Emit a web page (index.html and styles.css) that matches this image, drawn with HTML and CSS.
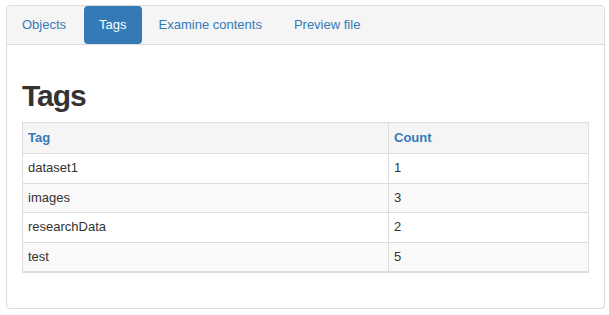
FILE: index.html
```html
<!DOCTYPE html>
<html>
<head>
<meta charset="utf-8">
<link rel="stylesheet" href="styles.css">
</head>
<body>
<div class="panel">
  <div class="panel-heading">
    <ul class="pills">
      <li><a href="#">Objects</a></li>
      <li class="active"><a href="#">Tags</a></li>
      <li><a href="#">Examine contents</a></li>
      <li><a href="#">Preview file</a></li>
    </ul>
  </div>
  <div class="panel-body">
    <h1 class="title">Tags</h1>
    <table class="tags">
      <colgroup><col class="c1"><col class="c2"></colgroup>
      <thead>
        <tr><th>Tag</th><th>Count</th></tr>
      </thead>
      <tbody>
        <tr><td>dataset1</td><td>1</td></tr>
        <tr><td>images</td><td>3</td></tr>
        <tr><td>researchData</td><td>2</td></tr>
        <tr><td>test</td><td>5</td></tr>
      </tbody>
    </table>
  </div>
</div>
</body>
</html>
```

FILE: styles.css
```css
html, body {
  margin: 0;
  padding: 0;
  background: #fff;
}
body {
  font-family: "Liberation Sans", Arial, Helvetica, sans-serif;
  font-size: 13px;
  color: #333;
  padding: 5px 0 0 6px;
}
.panel {
  width: 597px;
  border: 1px solid #ddd;
  border-radius: 4px;
  box-shadow: 0 1px 1px rgba(0,0,0,.05);
  background: #fff;
}
.panel-heading {
  background: #f5f5f5;
  border-bottom: 1px solid #ddd;
  border-radius: 3px 3px 0 0;
}
.pills {
  list-style: none;
  margin: 0;
  padding: 0;
  display: flex;
  gap: 2px;
}
.pills a {
  display: block;
  padding: 10px 15px 10px 15px;
  line-height: 18px;
  color: #337ab7;
  text-decoration: none;
  border-radius: 4px;
}
.pills li:first-child a {
  padding-right: 16px;
}
.pills .active a {
  background: #337ab7;
  color: #fff;
}
.panel-body {
  padding: 15px;
}
.title {
  margin: 19px 0 10px;
  font-size: 30px;
  line-height: 33px;
  font-weight: bold;
  letter-spacing: -1px;
  color: #333;
}
.tags {
  width: 567px;
  border-collapse: collapse;
  table-layout: fixed;
  margin-bottom: 20px;
  border: 1px solid #ddd;
  border-bottom: 2px solid #ddd;
}
.tags col.c1 { width: 366px; }
.tags th, .tags td {
  text-align: left;
  padding: 5px;
  line-height: 18.5px;
  border: 1px solid #ddd;
}
.tags th {
  background: #f5f5f5;
  color: #337ab7;
  font-weight: bold;
  padding: 6px 5px;
  line-height: 18px;
}
.tags tbody tr:nth-child(even) td {
  background: #f9f9f9;
}
.tags tbody tr:last-child td {
  border-bottom: 2px solid #ddd;
}
```
